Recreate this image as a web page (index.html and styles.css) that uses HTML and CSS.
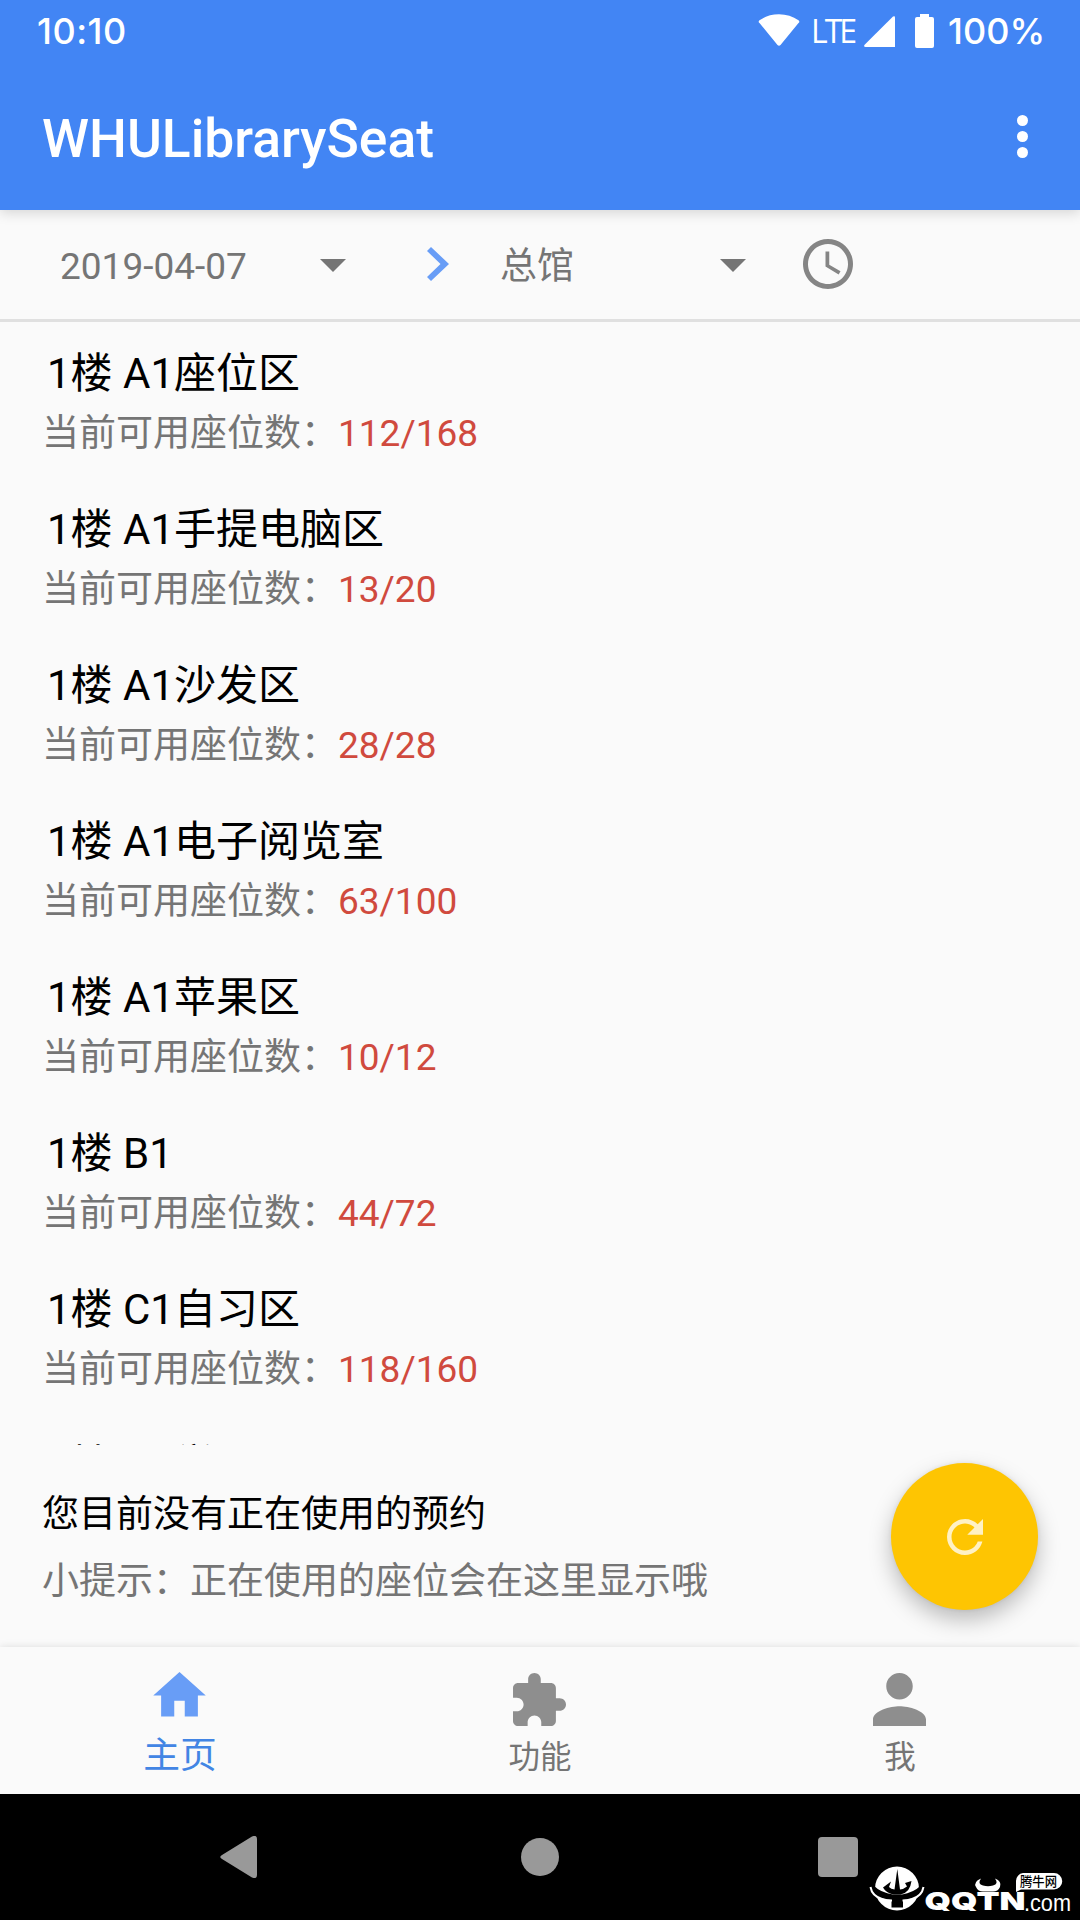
FILE: index.html
```html
<!DOCTYPE html>
<html lang="zh-CN">
  <head>
    <meta charset="UTF-8" />
    <title>WHULibrarySeat</title>
    <link rel="stylesheet" href="styles.css">
  </head>

  <body>
    <header class="header">
      <div class="status">
        <span class="time">10:10</span>
        <svg class="wifi" viewBox="0 0 42 32"><path d="M1.5 9Q-.2 7.600 1.500 6.300Q10 .3 21 .3T40.500 6.300Q42.200 7.600 40.500 9L22.500 31Q21 32.400 19.500 31z" /></svg>
        <span class="lte">LTE</span>
        <svg class="signal" viewBox="0 0 31 31"><path d="M29 .6Q31-.6 31 1.500V31H1.500Q-.7 30.500.6 28.800z" /></svg>
        <svg class="battery" viewBox="0 0 19 34"><path d="M5 0h9v3h3q2 0 2 2v27q0 2-2 2H2q-2 0-2-2V5q0-2 2-2h3z" /></svg>
        <span class="percent">100%</span>
      </div>
      <div class="toolbar">
        <h1>WHULibrarySeat</h1>
        <div class="more"><i></i><i></i><i></i></div>
      </div>
    </header>

    <div class="filter">
      <div class="select date"><span>2019-04-07</span><i class="caret"></i></div>
      <svg class="chevron" viewBox="0 0 22 34"><path d="M0 4l4-4 18 17L4 34l-4-4 13.500-13z" /></svg>
      <div class="select place"><span>总馆</span><i class="caret"></i></div>
      <svg class="clock" viewBox="0 0 24 24"><path d="M11.990 2C6.470 2 2 6.480 2 12s4.470 10 9.990 10C17.520 22 22 17.520 22 12S17.520 2 11.990 2zM12 20c-4.420 0-8-3.580-8-8s3.580-8 8-8 8 3.580 8 8-3.580 8-8 8zm.5-13H11v6l5.250 3.150.75-1.230-4.500-2.670z" /></svg>
    </div>

    <ul class="list">
      <li class="room">
        <h2>1楼 A1座位区</h2>
        <p>当前可用座位数：<b>112/168</b></p>
      </li>
      <li class="room">
        <h2>1楼 A1手提电脑区</h2>
        <p>当前可用座位数：<b>13/20</b></p>
      </li>
      <li class="room">
        <h2>1楼 A1沙发区</h2>
        <p>当前可用座位数：<b>28/28</b></p>
      </li>
      <li class="room">
        <h2>1楼 A1电子阅览室</h2>
        <p>当前可用座位数：<b>63/100</b></p>
      </li>
      <li class="room">
        <h2>1楼 A1苹果区</h2>
        <p>当前可用座位数：<b>10/12</b></p>
      </li>
      <li class="room">
        <h2>1楼 B1</h2>
        <p>当前可用座位数：<b>44/72</b></p>
      </li>
      <li class="room">
        <h2>1楼 C1自习区</h2>
        <p>当前可用座位数：<b>118/160</b></p>
      </li>
      <li class="room">
        <h2>1楼 C1学习区</h2>
      </li>
    </ul>

    <section class="booking">
      <div>
        <p class="current">您目前没有正在使用的预约</p>
        <p class="tip">小提示：正在使用的座位会在这里显示哦</p>
      </div>
      <div class="fab">
        <svg viewBox="0 0 24 24"><path d="M17.650 6.350C16.200 4.900 14.210 4 12 4c-4.420 0-7.990 3.580-7.990 8s3.570 8 7.990 8c3.730 0 6.840-2.550 7.730-6h-2.080c-.82 2.330-3.040 4-5.650 4-3.310 0-6-2.690-6-6s2.690-6 6-6c1.660 0 3.140.69 4.220 1.780L13 11h7V4l-2.350 2.350z" /></svg>
      </div>
    </section>

    <nav class="tabs">
      <div class="tab active">
        <svg class="home" viewBox="0 0 24 24"><path d="M10 20v-6h4v6h5v-8h3L12 3 2 12h3v8z" /></svg>
        <span>主页</span>
      </div>
      <div class="tab">
        <svg class="puzzle" viewBox="2 1 21 21"><path d="M20.500 11H19V7c0-1.100-.9-2-2-2h-4V3.500C13 2.120 11.880 1 10.500 1S8 2.120 8 3.500V5H4c-1.100 0-1.990.9-1.990 2v3.800H3.500c1.490 0 2.700 1.210 2.700 2.700s-1.210 2.700-2.700 2.700H2V20c0 1.100.9 2 2 2h3.800v-1.500c0-1.490 1.210-2.700 2.700-2.700 1.490 0 2.700 1.210 2.700 2.700V22H17c1.100 0 2-.9 2-2v-4h1.500c1.380 0 2.500-1.120 2.500-2.500S21.880 11 20.500 11z" /></svg>
        <span>功能</span>
      </div>
      <div class="tab">
        <svg class="person" viewBox="4 4 16 16"><path d="M12 12c2.210 0 4-1.790 4-4s-1.790-4-4-4-4 1.790-4 4 1.790 4 4 4zm0 2c-2.670 0-8 1.340-8 4v2h16v-2c0-2.660-5.330-4-8-4z" /></svg>
        <span>我</span>
      </div>
    </nav>

    <footer class="sysnav">
      <svg class="back" viewBox="0 0 37 42"><path d="M2 19Q-1.500 21 2 23L32 41.500Q37 43.500 37 39V3Q37-1.500 32 .5z" /></svg>
      <i class="circle"></i>
      <i class="square"></i>
    </footer>

    <svg class="watermark" viewBox="0 0 206 50">
      <!-- globe with trident -->
      <circle cx="28" cy="23.500" r="22" fill="#fff" />
      <path d="M4 20Q12 28 24 29.500H33Q44 28 52.500 20L53 29Q46 34 34 35V42.500H22.500V35Q10 34 3 29z" fill="#000" />
      <path d="M1.500 22Q3 31 13 34Q18 35.600 23 35.600M54.500 22Q53 31 43 34Q38 35.600 33.500 35.600" fill="none" stroke="#fff" stroke-width="2" />
      <path d="M28.300 4L31 24.500Q35 24 38 21.500L36 18L42.500 16Q41 28 31.500 29.500H24.500Q17 28 14 22.500L22 16.500L20 22Q22 24 25.500 24.500z" fill="#000" />
      <text class="wm-name" x="55.500" y="45" textLength="101" lengthAdjust="spacingAndGlyphs">QQTN</text>
      <text class="wm-com" x="155" y="45.500" textLength="47" lengthAdjust="spacingAndGlyphs">.com</text>
      <!-- horns -->
      <path d="M112 13.500Q104 17 107 22Q109 26.500 114 26.500H124Q129 26.500 131 22Q133 16 126 13.500Q130 19 124 20.500Q119 22 114 20.500Q108 19 112 13.500z" fill="#fff" />
      <path d="M154 8h31a8 8 0 0 1 0 16.500H152L147 27V16a8 8 0 0 1 7-8z" fill="#fff" />
      <text class="wm-cn" x="151" y="21" textLength="37" lengthAdjust="spacingAndGlyphs">腾牛网</text>
    </svg>
  </body>
</html>
```

FILE: styles.css
```css
body,
html {
  margin: 0;
  padding: 0;
}

body {
  position: relative;
  display: flex;
  flex-direction: column;
  width: 1080px;
  height: 1920px;
  overflow: hidden;
  background: #fafafa;
  color: #757575;
  font-family: Roboto, "Noto Sans CJK SC", sans-serif;
  font-size: 37px;
  line-height: 44px;
}

h1,
h2,
p,
ul {
  margin: 0;
  padding: 0;
  font-weight: 400;
}

svg {
  display: block;
  flex: none;
  fill: currentColor;
}

i {
  display: block;
  flex: none;
}

/* HEADER */
.header {
  z-index: 1;
  height: 210px;
  background: #4285f4;
  box-shadow: 0 3px 12px rgba(0, 0, 0, 0.15);
  color: #fff;
}

.status {
  display: flex;
  height: 63px;
  padding: 0 37px 0 37px;
  font-family: Inter, sans-serif;
  font-size: 36px;
  font-weight: 500;
  line-height: 62px;
}

.time {
  flex: 1;
  letter-spacing: 0.5px;
}

.wifi {
  width: 42px;
  height: 32px;
  margin-top: 14px;
}

.lte {
  width: 46px;
  margin-left: 11px;
  font-family: "Open Sans", sans-serif;
  font-size: 32px;
  font-weight: 400;
  letter-spacing: -3px;
}

.signal {
  width: 31px;
  height: 31px;
  margin: 16px 0 0 7px;
}

.battery {
  width: 19px;
  height: 34px;
  margin: 14px 14px 0 20px;
}

.percent {
  width: 95px;
  white-space: nowrap;
}

.toolbar {
  display: flex;
  justify-content: space-between;
  height: 147px;
  padding: 0 52px 0 42px;
}

h1 {
  margin-top: 43px;
  font-size: 53.4px;
  font-weight: 500;
  line-height: 66px;
}

.more {
  display: flex;
  flex-direction: column;
  gap: 5px;
  margin-top: 52px;
}

.more i {
  width: 11px;
  height: 11px;
  border-radius: 50%;
  background: #fff;
}

/* FILTER BAR */
.filter {
  display: flex;
  align-items: center;
  height: 109px;
  padding-left: 60px;
  border-bottom: 3px solid #e0e0e0;
}

.select {
  display: flex;
  align-items: center;
  justify-content: space-between;
  padding-top: 1px;
}

.select span {
  padding-top: 3px;
}

.date {
  width: 286px;
}

.place {
  width: 246px;
  margin-left: 51px;
}

.caret {
  border: 13px solid transparent;
  border-top-color: #757575;
  border-bottom: 0;
}

.chevron {
  width: 22px;
  height: 34px;
  margin: 0 0 1px 81px;
  color: #689df6;
}

.clock {
  width: 60px;
  height: 60px;
  margin: 0 0 1px 52px;
  color: #858585;
}

/* SEAT LIST */
.list {
  height: 1123px;
  overflow: hidden;
  list-style: none;
}

.room {
  height: 156px;
  padding: 28px 42px 0;
  box-sizing: border-box;
}

.room h2 {
  margin: 0 0 14px 5px;
  color: #000;
  font-size: 42px;
  line-height: 48px;
}

.room b {
  color: #d04a3e;
  font-weight: 400;
}

/* CURRENT BOOKING */
.booking {
  display: flex;
  justify-content: space-between;
  height: 202px;
  padding: 0 42px;
}

.current {
  margin-top: 48px;
  color: #000;
}

.tip {
  margin-top: 23px;
}

.fab {
  display: flex;
  align-items: center;
  justify-content: center;
  box-sizing: border-box;
  width: 147px;
  height: 147px;
  margin-top: 18px;
  border-radius: 50%;
  background: #fec502;
  box-shadow: 0 10px 22px rgba(0, 0, 0, 0.25), 0 0 4px rgba(0, 0, 0, 0.08);
  color: #fff1c4;
}

.fab svg {
  width: 54px;
  height: 54px;
}

/* TABS */
.tabs {
  z-index: 1;
  display: flex;
  height: 147px;
  background: #fafafa;
  box-shadow: 0 0 8px rgba(0, 0, 0, 0.12);
}

.tab {
  display: flex;
  flex: 1;
  flex-direction: column;
  align-items: center;
  justify-content: space-between;
  box-sizing: border-box;
  padding: 26px 0 17px;
  font-size: 31.5px;
  line-height: 38px;
}

.tab svg {
  margin-right: 2px;
  color: #8e8e8e;
}

.active {
  padding: 17px 0 16px;
  color: #4285e4;
  font-size: 36.75px;
  line-height: 44px;
}

.active svg {
  color: #689df6;
}

.home {
  width: 63px;
  height: 63px;
}

.puzzle,
.person {
  width: 53px;
  height: 53px;
}

/* SYSTEM NAVIGATION */
.sysnav {
  display: flex;
  align-items: center;
  height: 126px;
  padding-left: 220px;
  background: #000;
  color: #999;
}

.back {
  width: 37px;
  height: 42px;
}

.circle {
  width: 38px;
  height: 38px;
  margin: 0 259px 0 264px;
  border-radius: 50%;
  background: #999;
}

.square {
  width: 40px;
  height: 40px;
  border-radius: 4px;
  background: #999;
}

.watermark {
  position: absolute;
  z-index: 2;
  left: 869px;
  top: 1865px;
  width: 206px;
  height: 50px;
}

.wm-name {
  fill: #fff;
  font: 900 25px Inter, sans-serif;
}

.wm-com {
  fill: #fff;
  font: 23px "Liberation Sans", sans-serif;
}

.wm-cn {
  fill: #000;
  font: 500 13px "Noto Sans CJK SC", sans-serif;
}
```
